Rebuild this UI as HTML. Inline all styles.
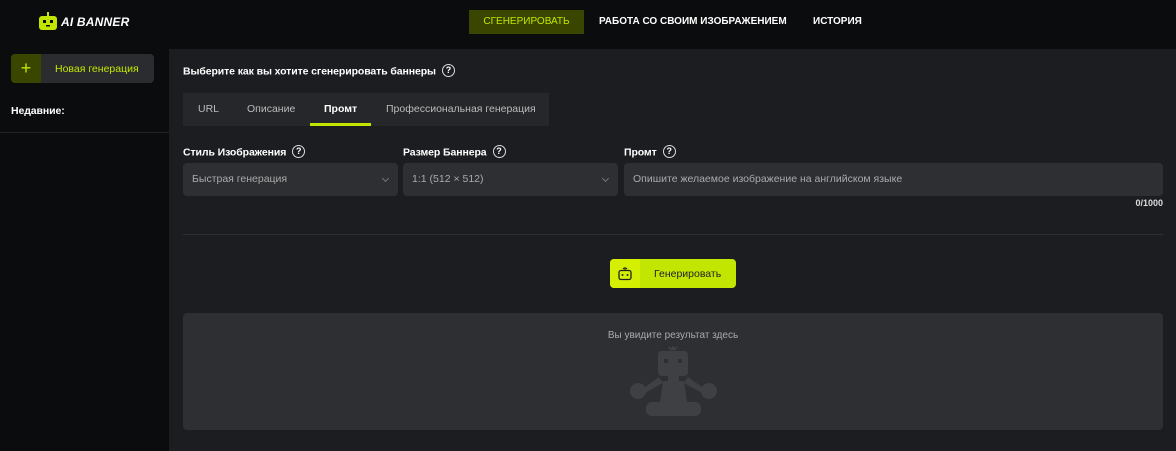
<!DOCTYPE html>
<html><head><meta charset="utf-8"><style>
*{box-sizing:border-box;margin:0;padding:0}
body{width:1176px;height:451px;background:#0b0c0e;font-family:"Liberation Sans",sans-serif;color:#fff;position:relative;overflow:hidden;font-size:10.5px}
.abs{position:absolute}
.nav a{position:absolute;top:10px;height:24px;line-height:24px;font-size:10px;font-weight:bold;color:#fff;padding:0 14px}
.main{left:169px;top:49px;width:1007px;height:402px;background:#1b1d20}
.lbl{font-size:10.5px;font-weight:bold;color:#fff;letter-spacing:-0.1px}
.q{display:inline-block;width:13px;height:13px;border:1.5px solid #ddd;border-radius:50%;font-size:9px;text-align:center;line-height:10px;margin-left:6px;vertical-align:middle;position:relative;top:-1px}
.inp{background:#2d2f33;border-radius:4px;height:33px;line-height:33px;padding-left:9px;color:#aaa;font-size:10.5px}
.chev{position:absolute;right:10px;top:13px;width:5px;height:5px;border-right:1px solid #777;border-bottom:1px solid #777;transform:rotate(45deg)}
</style></head><body>
<div class="abs" style="left:38px;top:11px">
<svg width="20" height="20" viewBox="0 0 20 20"><rect x="9" y="1" width="2" height="4" fill="#c3e600"/><rect x="1" y="5" width="18" height="14" rx="3" fill="#c3e600"/><rect x="5" y="9" width="3" height="3" fill="#0b0c0e"/><rect x="12" y="9" width="3" height="3" fill="#0b0c0e"/><rect x="8" y="14" width="4" height="1.5" fill="#0b0c0e"/></svg></div>
<div class="abs" style="left:61px;top:15px;font-size:12px;font-weight:bold;font-style:italic;letter-spacing:0.2px">AI BANNER</div>
<div class="nav">
<a style="left:469px;background:#3a4500;color:#c3e600;font-weight:normal;width:115px;text-align:center">СГЕНЕРИРОВАТЬ</a>
<a style="left:585px">РАБОТА СО СВОИМ ИЗОБРАЖЕНИЕМ</a>
<a style="left:799px">ИСТОРИЯ</a>
</div>
<div class="abs" style="left:11px;top:54px;width:143px;height:29px;background:#2a2c2f;border-radius:4px;overflow:hidden">
<div class="abs" style="left:0;top:0;width:30px;height:29px;background:#3a4500;color:#c3e600;font-size:18px;text-align:center;line-height:28px">+</div>
<div class="abs" style="left:44px;top:9px;color:#c3e600;font-size:10.5px">Новая генерация</div></div>
<div class="abs lbl" style="left:11px;top:105px">Недавние:</div>
<div class="abs" style="left:0;top:132px;width:169px;height:1px;background:#222"></div>
<div class="abs main">
<div class="abs lbl" style="left:14px;top:16px">Выберите как вы хотите сгенерировать баннеры<span class="q">?</span></div>
<div class="abs" style="left:14px;top:44px;width:366px;height:33px;background:#25272a">
<div class="abs" style="left:15px;top:10px;color:#bbb">URL</div>
<div class="abs" style="left:64px;top:10px;color:#bbb">Описание</div>
<div class="abs" style="left:141px;top:10px;font-weight:bold">Промт</div>
<div class="abs" style="left:127px;top:30px;width:61px;height:3px;background:#c3e600"></div>
<div class="abs" style="left:203px;top:10px;color:#bbb">Профессиональная генерация</div></div>
<div class="abs lbl" style="left:14px;top:97px">Стиль Изображения<span class="q">?</span></div>
<div class="abs lbl" style="left:234px;top:97px">Размер Баннера<span class="q">?</span></div>
<div class="abs lbl" style="left:455px;top:97px">Промт<span class="q">?</span></div>
<div class="abs inp" style="left:14px;top:114px;width:215px">Быстрая генерация<div class="chev"></div></div>
<div class="abs inp" style="left:234px;top:114px;width:215px">1:1 (512 × 512)<div class="chev"></div></div>
<div class="abs inp" style="left:455px;top:114px;width:539px">Опишите желаемое изображение на английском языке</div>
<div class="abs" style="right:13px;top:149px;font-size:9px;font-weight:bold;color:#ddd">0/1000</div>
<div class="abs" style="left:14px;top:185px;width:980px;height:1px;background:#2d2f33"></div>
<div class="abs" style="left:441px;top:210px;width:126px;height:29px;background:#c3e600;border-radius:4px;overflow:hidden">
<div class="abs" style="left:0;top:0;width:30px;height:29px;background:#d4f000"></div>
<svg class="abs" style="left:7px;top:7px" width="16" height="15" viewBox="0 0 16 15"><path d="M8 1v3M6 2l1 1M10 2l-1 1" stroke="#222" stroke-width="1.2"/><rect x="2" y="4.5" width="12" height="9" rx="2" fill="none" stroke="#222" stroke-width="1.3"/><circle cx="5.5" cy="9" r="1" fill="#222"/><circle cx="10.5" cy="9" r="1" fill="#222"/></svg>
<div class="abs" style="left:44px;top:9px;color:#222;font-size:10.5px">Генерировать</div></div>
<div class="abs" style="left:14px;top:264px;width:980px;height:117px;background:#2d2f33;border-radius:4px">
<div class="abs" style="left:0;width:100%;top:17px;text-align:center;color:#aaa;font-size:10px">Вы увидите результат здесь</div>
<svg class="abs" style="left:443px;top:33px" width="95" height="72" viewBox="0 0 95 72"><g fill="#3e4044"><path d="M47 0v4M43 1l3 3M51 1l-3 3" stroke="#3e4044" stroke-width="2"/><rect x="32" y="5" width="30" height="25" rx="4"/><rect x="42" y="30" width="11" height="5"/><path d="M37 35h21l3 21h-27z"/><path d="M37 37l-18 10-4-3 18-13z"/><path d="M58 37l18 10 4-3-18-13z"/><circle cx="12" cy="45" r="8"/><circle cx="83" cy="45" r="8"/><rect x="20" y="56" width="55" height="14" rx="6"/></g><g fill="#2d2f33"><rect x="38" y="13" width="4" height="4"/><rect x="52" y="13" width="4" height="4"/></g></svg>
</div>
</div>
</body></html>
